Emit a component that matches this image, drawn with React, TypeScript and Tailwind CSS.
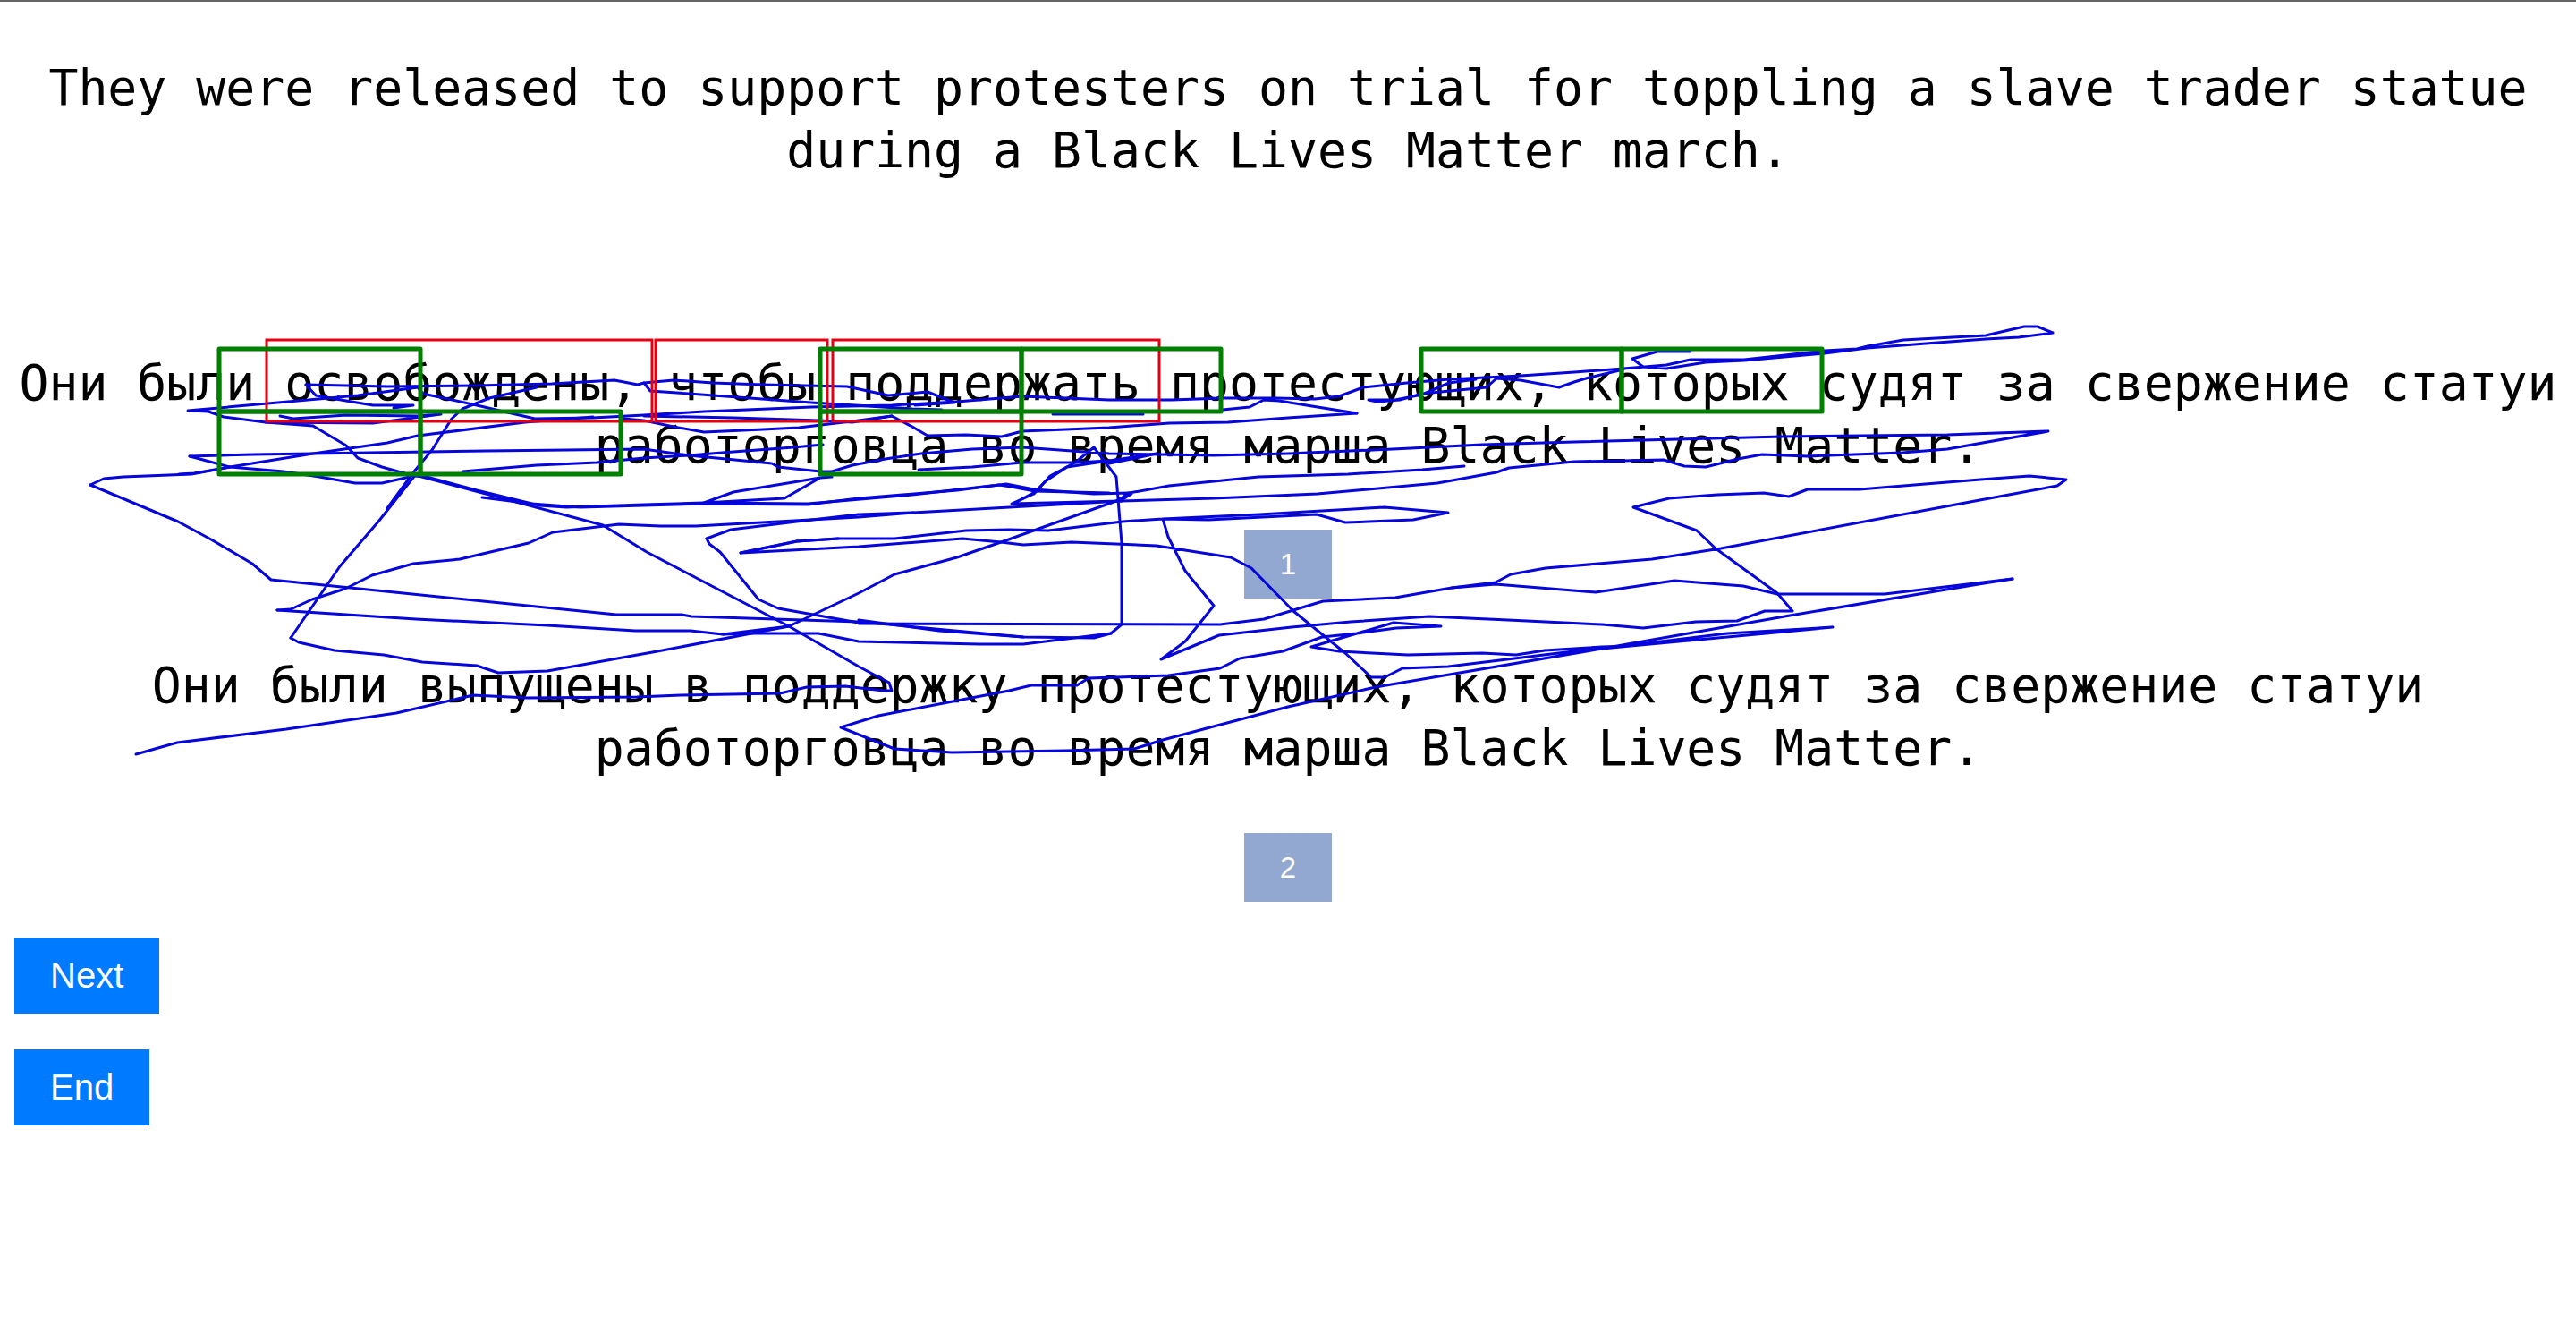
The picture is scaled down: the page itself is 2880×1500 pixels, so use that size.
const redBoxes = [
  [298, 380, 431, 91],
  [733, 380, 192, 91],
  [931, 380, 365, 91],
];

const greenBoxes = [
  [245, 390, 225, 70],
  [245, 460, 225, 70],
  [470, 460, 224, 70],
  [917, 390, 225, 70],
  [1142, 390, 223, 70],
  [917, 460, 225, 70],
  [1589, 390, 224, 70],
  [1813, 390, 224, 70],
];

// pen strokes of the annotator, in page pixels
const strokes = [
  "1890,393 1853,393 1825,401 1837,410 1863,412 1907,405 1950,403 2040,395 2088,389 2153,384 2220,379 2257,377 2295,372 2278,365 2263,365 2220,375 2128,380 2088,387 2076,390 2040,392 1950,402 1890,402 1863,408 1815,412 1760,416 1700,420 1620,424 1573,428 1524,433 1497,443 1470,446 1427,445 1367,445 1310,447 1283,447 1240,447 1143,443 1070,449 997,453 907,455 787,460 720,464 663,467 598,468 563,460 533,453 473,440 467,433 400,442 367,445 210,459 233,460 250,466 297,472 350,476 387,498 400,512 427,522 463,532 477,533 533,548 603,565 633,567 720,564 787,562 903,563 1020,553 1117,542 1130,544 1157,549 1240,551",
  "1815,413 1773,423 1760,427 1743,433 1700,425 1673,423 1662,433 1590,440 1565,447 1540,449 1530,447 1560,447 1590,441 1620,428 1650,424",
  "1517,462 1473,455 1430,448 1413,447 1397,455 1367,458",
  "1517,462 1440,467 1373,472 1307,473 1240,478 1143,482 1120,488 1080,486 1037,487 1020,477 997,465 960,470 893,478 853,480 787,483 753,477 720,470 697,468",
  "342,430 433,432 533,431 617,429 687,425 713,430 720,428 753,425 797,428 853,430 947,432 993,442 1037,438 1067,450 1023,453",
  "342,430 353,442 387,448 417,453 462,453 440,456",
  "720,428 727,437 770,440 907,450 1020,457 1053,458",
  "313,465 328,468 387,464 467,465 493,463 417,473 297,472",
  "720,465 820,467 917,470 953,472 997,465",
  "1177,463 1278,463",
  "200,530 217,529 257,522 350,507 433,495 467,487 587,472 663,466",
  "212,510 227,514 257,522 317,527 357,533 397,540 427,540 458,533",
  "212,510 283,508 413,506 543,504 633,503 720,502 770,509 863,518 870,522 917,527 930,527 953,520 990,513 1030,507 1087,502 1143,500 1240,507 1357,509 1440,507 1557,502 1657,497 1760,494 1993,488 2177,486 2290,482 2177,502 2127,506 2020,510 1970,508 1943,513 1907,522 1883,521 1860,514 1760,516 1687,523 1673,528 1607,540 1473,552 1357,557 1253,560 1131,563 1156,552 1174,532 1202,517 1223,500 1248,533 1254,607 1254,698 1242,708 1223,713 1144,712 1050,705 960,693",
  "517,527 600,520 667,517 720,512 770,509 820,505 887,500 920,497",
  "433,568 463,527 483,503 505,468 517,457 547,445 600,433",
  "930,533 917,534 877,557 787,562 820,550 917,534",
  "1027,525 1087,522 1143,517 1203,517 1240,515 1293,507 1270,512 1240,518",
  "1133,563 1157,550 1170,537 1193,522 1240,515",
  "1637,521 1590,525 1507,530 1407,533 1307,543 1257,552 1265,552 1252,560",
  "960,697 1364,698 1413,692 1479,672 1560,668 1623,657 1672,651 1689,642 1728,635 1847,625 1924,613 2208,560 2300,543 2310,536 2269,532 2214,536 2079,547 2021,547 2000,555 1972,551 1920,553 1866,557 1826,567 1848,575 1897,593 1918,613 1987,663 2004,683 1973,683 1942,694 1896,695 1837,702 1791,698 1686,693 1598,689 1510,695 1444,701 1363,710 1298,737 1325,717 1357,677 1325,638 1306,600 1300,580 1408,575 1548,567 1619,573 1580,581 1504,584 1472,575 1351,581 1300,580 1255,583 1172,593 1128,592 1080,593 1000,602 960,602 937,602 891,605 828,618 960,611 1076,602 1119,606 1144,609 1198,606 1293,610 1376,623 1399,635 1446,683 1504,730 1533,757 1548,757 1568,747 1619,745 1759,728 1823,722 2049,701 1931,708 1791,725 1538,768 1440,790 1300,827 1268,837 1191,839 1064,841 1000,837 940,813 982,800 1060,785 1128,772 1153,766 1204,766 1217,758 1306,755 1364,747 1386,736 1434,728 1478,712 1517,708 1558,696 1611,700 1561,702 1517,708 1466,723 1497,728 1574,732 1657,730 1695,732 1727,727 1791,723 1823,722",
  "2250,647 2107,664 1987,664 1949,655 1872,649 1784,662 1672,653 1623,657",
  "2250,647 2212,653 2001,688 1791,725",
  "101,542 116,535 138,533 214,530 257,522",
  "101,542 199,583 236,603 282,630 303,648 689,687 762,687 773,689 960,695 1144,712",
  "310,682 325,681 349,670 386,658 416,643 462,630 514,625 591,607 618,595 692,586 738,588 778,588 888,582 960,578 1021,573 1254,560",
  "960,557 1070,548 1125,541 1156,547 1223,552 1263,551 1248,560 1122,605 1070,623 1000,642 960,663 882,700 808,709 772,705 710,705 612,699 465,692 310,682",
  "325,713 380,633 423,583 465,530",
  "325,713 334,718 374,727 429,732 472,740 533,744 557,752 612,750 735,728 882,700",
  "468,532 674,587 723,617 882,700 960,745 994,763 997,772 988,772 945,767 902,768 872,775 761,777 712,779 590,780 529,777 443,797 320,815 198,830 152,843",
  "539,556 594,563 649,567 787,563 903,564 960,557",
  "828,618 891,605 937,602",
  "790,602 817,592 899,582 960,575 1021,573",
  "790,602 793,608 805,617 848,670 870,680 960,696",
  "808,709 836,708 915,708 960,717 1095,720 1144,720 1242,708",
];

const Sentence = ({ children, className }: { children: string; className: string }) => (
  <p className={`text-center text-[54.8px] leading-[70px] text-black font-['DejaVu_Sans_Mono',monospace] ${className}`}>
    {children}
  </p>
);

const NumberBox = ({ n }: { n: number }) => (
  <div className="mx-auto w-[98px] bg-[#92a8d1] py-5 text-center text-[33px] leading-[37px] text-white font-['Liberation_Sans',sans-serif]">
    {n}
  </div>
);

const ActionButton = ({ label }: { label: string }) => (
  <button className="bg-[#007bff] px-10 py-5 text-[40px] leading-[45px] text-white font-['Liberation_Sans',sans-serif]">
    {label}
  </button>
);

const App = () => {
  return (
    <div className="relative min-h-[1500px] w-full overflow-hidden bg-white">
      <div className="h-[2px] bg-[#666666]" />
      <Sentence className="mt-[61px]">
        They were released to support protesters on trial for toppling a slave trader statue during a Black Lives Matter march.
      </Sentence>
      <Sentence className="mt-[190px]">
        Они были освобождены, чтобы поддержать протестующих, которых судят за свержение статуи работорговца во время марша Black Lives Matter.
      </Sentence>
      <div className="mt-[59px]">
        <NumberBox n={1} />
      </div>
      <Sentence className="mt-[62px]">
        Они были выпущены в поддержку протестующих, которых судят за свержение статуи работорговца во время марша Black Lives Matter.
      </Sentence>
      <div className="mt-[60px]">
        <NumberBox n={2} />
      </div>
      <div className="ml-4 mt-10 flex flex-col items-start gap-10">
        <ActionButton label="Next" />
        <ActionButton label="End" />
      </div>

      <svg className="absolute left-0 top-0 pointer-events-none" width={2880} height={1500} fill="none">
        {strokes.map((points, i) => (
          <polyline key={i} points={points} stroke="#0505dc" strokeWidth={3} strokeLinejoin="round" strokeLinecap="round" />
        ))}
        {redBoxes.map(([x, y, w, h], i) => (
          <rect key={i} x={x} y={y} width={w} height={h} stroke="#e60012" strokeWidth={3} />
        ))}
        {greenBoxes.map(([x, y, w, h], i) => (
          <rect key={i} x={x} y={y} width={w} height={h} stroke="#008000" strokeWidth={5} strokeLinejoin="round" />
        ))}
      </svg>
    </div>
  );
};

export default App;
